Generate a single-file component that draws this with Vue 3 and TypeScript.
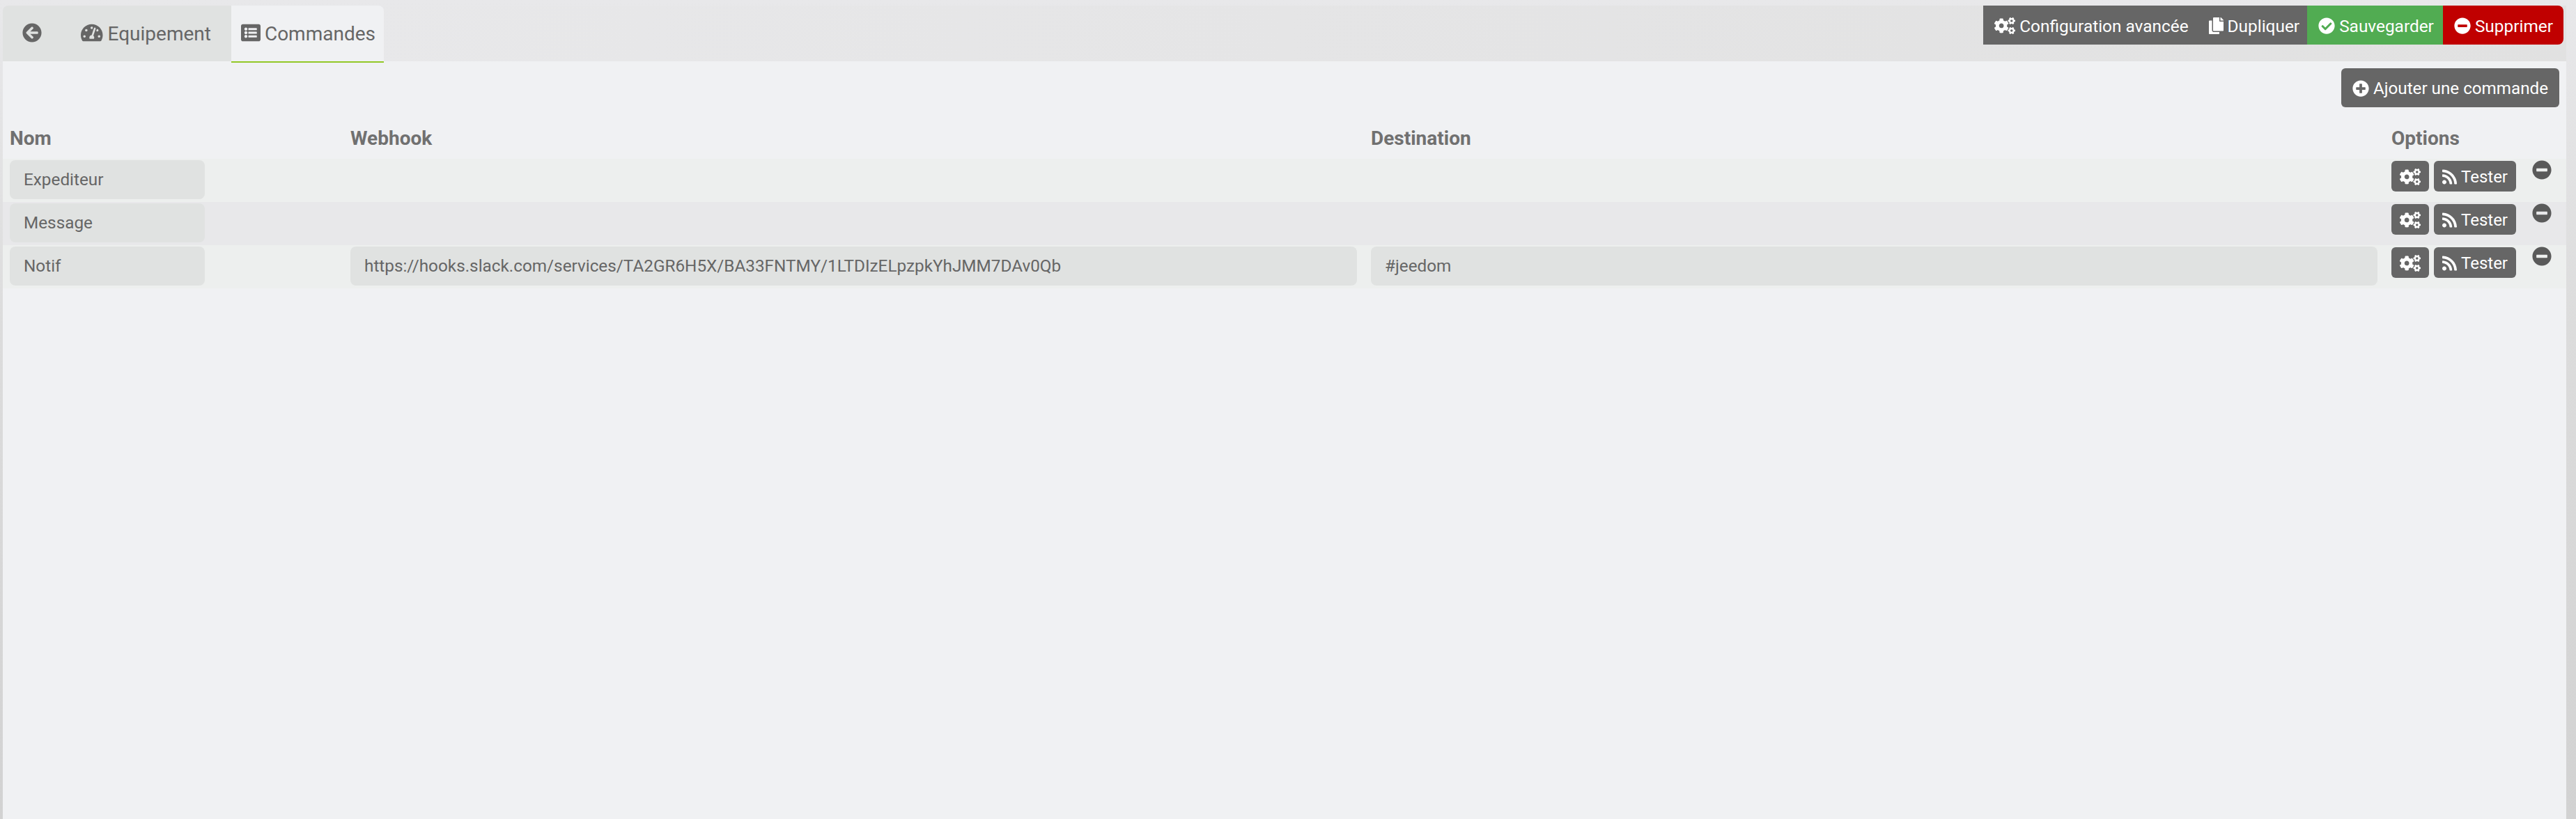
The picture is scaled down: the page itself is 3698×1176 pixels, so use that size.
<script setup lang="ts">
// FontAwesome 5 solid shapes used across the page
const icons = {
  back: { box: '0 0 512 512', d: 'M256 504C119 504 8 393 8 256S119 8 256 8s248 111 248 248-111 248-248 248zm28.9-143.6L209.4 288H392c13.3 0 24-10.7 24-24v-16c0-13.3-10.7-24-24-24H209.4l75.5-72.4c9.7-9.3 9.9-24.8.4-34.3l-11-10.9c-9.4-9.4-24.6-9.4-33.9 0L107.7 239c-9.4 9.4-9.4 24.6 0 33.9l132.7 132.7c9.4 9.4 24.6 9.4 33.9 0l11-10.9c9.5-9.5 9.3-25-.4-34.3z' },
  gauge: { box: '0 0 576 512', d: 'M288 32C128.94 32 0 160.94 0 320c0 52.8 14.25 102.26 39.06 144.8 5.61 9.62 16.3 15.2 27.44 15.2h443c11.14 0 21.83-5.58 27.44-15.2C561.75 422.26 576 372.8 576 320c0-159.06-128.94-288-288-288zm0 64c14.71 0 26.58 10.13 30.32 23.65-1.11 2.26-2.64 4.23-3.45 6.67l-9.22 27.67c-5.13 3.49-10.97 6.01-17.64 6.01-17.67 0-32-14.33-32-32S270.33 96 288 96zM96 384c-17.67 0-32-14.33-32-32s14.33-32 32-32 32 14.33 32 32-14.33 32-32 32zm48-160c-17.67 0-32-14.33-32-32s14.33-32 32-32 32 14.33 32 32-14.33 32-32 32zm246.77-72.41l-61.33 184C343.13 347.33 352 364.54 352 384c0 11.72-3.38 22.55-8.88 32H232.88c-5.5-9.45-8.88-20.28-8.88-32 0-33.94 26.5-61.43 59.9-63.59l61.34-184.01c4.17-12.56 17.73-19.45 30.36-15.17 12.57 4.19 19.35 17.79 15.17 30.36zm14.66 57.2l15.52-46.55c3.47-1.29 7.13-2.23 11.05-2.23 17.67 0 32 14.33 32 32s-14.33 32-32 32c-11.38-.01-20.89-6.28-26.57-15.22zM480 384c-17.67 0-32-14.33-32-32s14.33-32 32-32 32 14.33 32 32-14.33 32-32 32z' },
  list: { box: '0 0 512 512', d: 'M464 480H48c-26.51 0-48-21.49-48-48V80c0-26.51 21.49-48 48-48h416c26.51 0 48 21.49 48 48v352c0 26.51-21.49 48-48 48zM128 120c-22.091 0-40 17.909-40 40s17.909 40 40 40 40-17.909 40-40-17.909-40-40-40zm0 96c-22.091 0-40 17.909-40 40s17.909 40 40 40 40-17.909 40-40-17.909-40-40-40zm0 96c-22.091 0-40 17.909-40 40s17.909 40 40 40 40-17.909 40-40-17.909-40-40-40zm288-136v-32c0-6.627-5.373-12-12-12H204c-6.627 0-12 5.373-12 12v32c0 6.627 5.373 12 12 12h200c6.627 0 12-5.373 12-12zm0 96v-32c0-6.627-5.373-12-12-12H204c-6.627 0-12 5.373-12 12v32c0 6.627 5.373 12 12 12h200c6.627 0 12-5.373 12-12zm0 96v-32c0-6.627-5.373-12-12-12H204c-6.627 0-12 5.373-12 12v32c0 6.627 5.373 12 12 12h200c6.627 0 12-5.373 12-12z' },
  cogs: { box: '0 0 640 512', d: 'M512.1 191l-8.2 14.3c-3 5.3-9.4 7.5-15.1 5.4-11.8-4.4-22.6-10.7-32.1-18.6-4.6-3.8-5.8-10.5-2.8-15.7l8.2-14.3c-6.9-8-12.3-17.3-15.9-27.4h-16.5c-6 0-11.2-4.3-12.2-10.3-2-12-2.1-24.6 0-37.1 1-6 6.2-10.4 12.2-10.4h16.5c3.6-10.1 9-19.4 15.9-27.4l-8.2-14.3c-3-5.2-1.9-11.9 2.8-15.7 9.5-7.9 20.4-14.2 32.1-18.6 5.7-2.1 12.1.1 15.1 5.4l8.2 14.3c10.5-1.9 21.2-1.9 31.7 0L552 6.3c3-5.3 9.4-7.5 15.1-5.4 11.8 4.4 22.6 10.7 32.1 18.6 4.6 3.8 5.8 10.5 2.8 15.7l-8.2 14.3c6.9 8 12.3 17.3 15.9 27.4h16.5c6 0 11.2 4.3 12.2 10.3 2 12 2.1 24.6 0 37.1-1 6-6.2 10.4-12.2 10.4h-16.5c-3.6 10.1-9 19.4-15.9 27.4l8.2 14.3c3 5.2 1.9 11.9-2.8 15.7-9.5 7.9-20.4 14.2-32.1 18.6-5.7 2.1-12.1-.1-15.1-5.4l-8.2-14.3c-10.4 1.9-21.2 1.9-31.7 0zm-10.5-58.8c38.5 29.6 82.4-14.3 52.8-52.8-38.5-29.7-82.4 14.3-52.8 52.8zM386.3 286.1l33.7 16.8c10.1 5.8 14.5 18.1 10.5 29.1-8.9 24.2-26.4 46.4-42.6 65.8-7.4 8.9-20.2 11.1-30.3 5.3l-29.1-16.8c-16 13.7-34.6 24.6-54.9 31.7v33.6c0 11.6-8.3 21.6-19.7 23.6-24.6 4.2-50.4 4.4-75.9 0-11.5-2-20-11.9-20-23.6V418c-20.3-7.2-38.9-18-54.9-31.7L74 403c-10 5.8-22.9 3.6-30.3-5.3-16.2-19.4-33.3-41.6-42.2-65.7-4-10.9.4-23.2 10.5-29.1l33.3-16.8c-3.9-20.9-3.9-42.4 0-63.4L12 205.8c-10.1-5.8-14.6-18.1-10.5-29 8.9-24.2 26-46.4 42.2-65.8 7.4-8.9 20.2-11.1 30.3-5.3l29.1 16.8c16-13.7 34.6-24.6 54.9-31.7V57.1c0-11.5 8.2-21.5 19.6-23.5 24.6-4.2 50.5-4.4 76-.1 11.5 2 20 11.9 20 23.6v33.6c20.3 7.2 38.9 18 54.9 31.7l29.1-16.8c10-5.8 22.9-3.6 30.3 5.3 16.2 19.4 33.2 41.6 42.1 65.8 4 10.9.1 23.2-10 29.1l-33.7 16.8c3.9 21 3.9 42.5 0 63.5zm-117.6 21.1c59.2-77-28.7-164.9-105.7-105.7-59.2 77 28.7 164.9 105.7 105.7zm243.4 182.7l-8.2 14.3c-3 5.3-9.4 7.5-15.1 5.4-11.8-4.4-22.6-10.7-32.1-18.6-4.6-3.8-5.8-10.5-2.8-15.7l8.2-14.3c-6.9-8-12.3-17.3-15.9-27.4h-16.5c-6 0-11.2-4.3-12.2-10.3-2-12-2.1-24.6 0-37.1 1-6 6.2-10.4 12.2-10.4h16.5c3.6-10.1 9-19.4 15.9-27.4l-8.2-14.3c-3-5.2-1.9-11.9 2.8-15.7 9.5-7.9 20.4-14.2 32.1-18.6 5.7-2.1 12.1.1 15.1 5.4l8.2 14.3c10.5-1.9 21.2-1.9 31.7 0l8.2-14.3c3-5.3 9.4-7.5 15.1-5.4 11.8 4.4 22.6 10.7 32.1 18.6 4.6 3.8 5.8 10.5 2.8 15.7l-8.2 14.3c6.9 8 12.3 17.3 15.9 27.4h16.5c6 0 11.2 4.3 12.2 10.3 2 12 2.1 24.6 0 37.1-1 6-6.2 10.4-12.2 10.4h-16.5c-3.6 10.1-9 19.4-15.9 27.4l8.2 14.3c3 5.2 1.9 11.9-2.8 15.7-9.5 7.9-20.4 14.2-32.1 18.6-5.7 2.1-12.1-.1-15.1-5.4l-8.2-14.3c-10.4 1.9-21.2 1.9-31.7 0zM501.6 431c38.5 29.6 82.4-14.3 52.8-52.8-38.5-29.6-82.4 14.3-52.8 52.8z' },
  copy: { box: '0 0 448 512', d: 'M320 448v40c0 13.255-10.745 24-24 24H24c-13.255 0-24-10.745-24-24V120c0-13.255 10.745-24 24-24h72v296c0 30.879 25.121 56 56 56h168zm0-344V0H152c-13.255 0-24 10.745-24 24v368c0 13.255 10.745 24 24 24h272c13.255 0 24-10.745 24-24V128H344c-13.2 0-24-10.8-24-24zm120.971-31.029L375.029 7.029A24 24 0 0 0 358.059 0H352v96h96v-6.059a24 24 0 0 0-7.029-16.97z' },
  check: { box: '0 0 512 512', d: 'M504 256c0 136.967-111.033 248-248 248S8 392.967 8 256 119.033 8 256 8s248 111.033 248 248zM227.314 387.314l184-184c6.248-6.248 6.248-16.379 0-22.627l-22.627-22.627c-6.248-6.249-16.379-6.249-22.628 0L216 308.118l-70.059-70.059c-6.248-6.248-16.379-6.248-22.628 0l-22.627 22.627c-6.248 6.248-6.248 16.379 0 22.627l104 104c6.249 6.249 16.379 6.249 22.628.001z' },
  minus: { box: '0 0 512 512', d: 'M256 8C119 8 8 119 8 256s111 248 248 248 248-111 248-248S393 8 256 8zM124 296c-6.6 0-12-5.4-12-12v-56c0-6.6 5.4-12 12-12h264c6.6 0 12 5.4 12 12v56c0 6.6-5.4 12-12 12H124z' },
  plus: { box: '0 0 512 512', d: 'M256 8C119 8 8 119 8 256s111 248 248 248 248-111 248-248S393 8 256 8zm144 276c0 6.6-5.4 12-12 12h-92v92c0 6.6-5.4 12-12 12h-56c-6.6 0-12-5.4-12-12v-92h-92c-6.6 0-12-5.4-12-12v-56c0-6.6 5.4-12 12-12h92v-92c0-6.6 5.4-12 12-12h56c6.6 0 12 5.4 12 12v92h92c6.6 0 12 5.4 12 12v56z' },
  rss: { box: '0 0 448 512', d: 'M128.081 415.959c0 35.369-28.672 64.041-64.041 64.041S0 451.328 0 415.959s28.672-64.041 64.041-64.041 64.04 28.673 64.04 64.041zm175.66 47.25c-8.354-154.6-132.185-278.587-286.95-286.95C7.656 175.765 0 183.105 0 192.253v48.069c0 8.415 6.49 15.472 14.887 16.018 111.832 7.284 201.473 96.702 208.772 208.772.547 8.397 7.604 14.887 16.018 14.887h48.069c9.149.001 16.489-7.655 15.995-16.79zm144.249.288C439.596 229.677 251.465 40.445 16.503 32.01 7.473 31.686 0 38.981 0 48.016v48.068c0 8.625 6.835 15.645 15.453 15.999 191.179 7.839 344.627 161.316 352.465 352.465.353 8.618 7.373 15.453 15.999 15.453h48.068c9.034-.001 16.329-7.474 16.005-16.504z' },
}

const actions = [
  { label: 'Configuration avancée', icon: icons.cogs, kind: 'grey' },
  { label: 'Dupliquer', icon: icons.copy, kind: 'grey' },
  { label: 'Sauvegarder', icon: icons.check, kind: 'green' },
  { label: 'Supprimer', icon: icons.minus, kind: 'red' },
]

const commands = [
  { name: 'Expediteur', webhook: '', destination: '' },
  { name: 'Message', webhook: '', destination: '' },
  {
    name: 'Notif',
    webhook: 'https://hooks.slack.com/services/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',
    destination: '#jeedom',
  },
]
</script>

<template>
  <div class="page">
    <div class="nav">
      <div class="tab back">
        <svg class="icon tab-icon" :viewBox="icons.back.box"><path :d="icons.back.d" /></svg>
      </div>
      <div class="tab">
        <svg class="icon tab-icon" :viewBox="icons.gauge.box"><path :d="icons.gauge.d" /></svg>
        <span>Equipement</span>
      </div>
      <div class="tab active">
        <svg class="icon tab-icon" :viewBox="icons.list.box"><path :d="icons.list.d" /></svg>
        <span>Commandes</span>
      </div>

      <div class="actions">
        <div v-for="a in actions" :key="a.label" class="action" :class="a.kind">
          <svg class="icon" :viewBox="a.icon.box"><path :d="a.icon.d" /></svg>
          <span>{{ a.label }}</span>
        </div>
      </div>
    </div>

    <div class="content">
      <div class="toolbar">
        <div class="btn add">
          <svg class="icon" :viewBox="icons.plus.box"><path :d="icons.plus.d" /></svg>
          <span>Ajouter une commande</span>
        </div>
      </div>

      <div class="grid head">
        <div>Nom</div>
        <div>Webhook</div>
        <div>Destination</div>
        <div>Options</div>
      </div>

      <div v-for="c in commands" :key="c.name" class="grid row">
        <div class="field name">{{ c.name }}</div>
        <div v-if="c.webhook" class="field">{{ c.webhook }}</div>
        <div v-else></div>
        <div v-if="c.destination" class="field">{{ c.destination }}</div>
        <div v-else></div>
        <div class="options">
          <div class="btn small">
            <svg class="icon" :viewBox="icons.cogs.box"><path :d="icons.cogs.d" /></svg>
          </div>
          <div class="btn small">
            <svg class="icon" :viewBox="icons.rss.box"><path :d="icons.rss.d" /></svg>
            <span>Tester</span>
          </div>
          <svg class="icon remove" :viewBox="icons.minus.box"><path :d="icons.minus.d" /></svg>
        </div>
      </div>
    </div>
  </div>
</template>

<style scoped>
.page {
  box-sizing: border-box;
  width: 3698px;
  height: 1176px;
  padding: 8px 14px 0 4px;
  display: flex;
  flex-direction: column;
  overflow: hidden;
  font-family: Roboto, "Liberation Sans", sans-serif;
  font-size: 24px;
  color: #666;
  background: linear-gradient(to bottom, #e8e8ea 0%, #dcdcdc 40%, #d2d2d2 100%);
}

.icon {
  display: block;
  flex-shrink: 0;
  height: 24px;
  fill: currentColor;
}

/* barre du haut */
.nav {
  display: flex;
  height: 80px;
  padding-right: 4px;
  border-radius: 8px 0 0 0;
  background: linear-gradient(to right, #e9e9eb, #e1e1e1);
}

.tab {
  display: flex;
  align-items: center;
  gap: 7px;
  height: 80px;
  padding: 0 29px 0 28px;
  font-size: 28px;
  background: #e0e2e1;
}

.tab-icon {
  height: 28px;
  margin-top: -3px;
}

.back {
  padding: 0 28px 0 28px;
  border-top-left-radius: 8px;
}

.active {
  position: relative;
  z-index: 1;
  box-sizing: content-box;
  padding: 0 12px 0 14px;
  gap: 6px;
  background: #f0f1f3;
  border-bottom: 2px solid #92c826;
  border-top-right-radius: 8px;
}

.actions {
  display: flex;
  height: 56px;
  margin-left: auto;
  overflow: hidden;
  border-radius: 0 8px 8px 0;
  font-size: 24.4px;
  color: #fff;
}

.action {
  display: flex;
  align-items: center;
  gap: 6px;
  padding: 2px 13px 0 16px;
}

.grey {
  background: #666;
}

.green {
  margin-left: -2px;
  background: #51ac52;
}

.red {
  padding-right: 15px;
  background: #c00000;
}

/* contenu */
.content {
  flex: 1;
  background: #f0f1f3;
}

.toolbar {
  display: flex;
  justify-content: flex-end;
  padding: 10px 10px 0 0;
}

.btn {
  box-sizing: border-box;
  display: flex;
  align-items: center;
  gap: 6px;
  border-radius: 6px;
  color: #fff;
  background: #666;
}

.add {
  height: 56px;
  padding: 2px 16px 0;
  font-size: 24.2px;
}

.grid {
  display: grid;
  grid-template-columns: 469px 1445px 1445px 1fr;
  column-gap: 20px;
  padding-left: 10px;
}

.head {
  box-sizing: border-box;
  height: 74px;
  padding-top: 28px;
  font-size: 28px;
  font-weight: 700;
  color: #707070;
}

.row {
  box-sizing: border-box;
  height: 62px;
  padding-top: 2px;
  background: #edefee;
}

.row:nth-child(even) {
  background: #e8e8ea;
}

.field {
  box-sizing: border-box;
  height: 56px;
  padding: 0 20px;
  font-size: 24.3px;
  line-height: 56px;
  border-radius: 8px;
  background: #e0e2e1;
}

.name {
  width: 280px;
}

.options {
  display: flex;
  align-items: flex-start;
  gap: 7px;
}

.small {
  height: 44px;
  margin-top: 1px;
  padding: 2px 12px 0;
}

.remove {
  height: 28px;
  margin-left: 16px;
  color: #5a5a5a;
}
</style>

<style>
body {
  background: #dcdcdc;
}
</style>
